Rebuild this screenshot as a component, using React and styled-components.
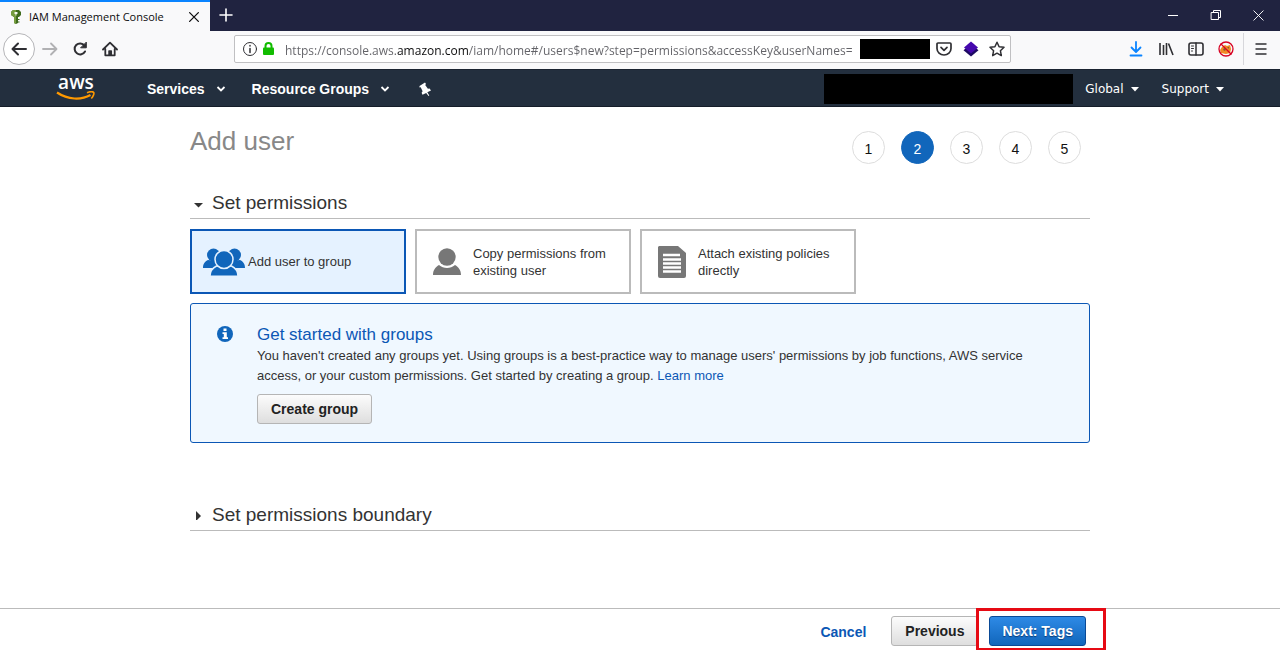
import React from "react";
import styled, { createGlobalStyle } from "styled-components";

const GlobalStyle = createGlobalStyle`
  * {
    box-sizing: border-box;
  }
  body {
    margin: 0;
    background: #fff;
    color: #333;
    font-family: "Liberation Sans", Arial, sans-serif;
    font-size: 14px;
  }
  button {
    font: inherit;
    color: inherit;
    padding: 0;
    border: 0;
    background: none;
    cursor: pointer;
  }
  a {
    color: #0b57b5;
    text-decoration: none;
  }
  svg {
    display: block;
    flex: none;
  }
`;

const Page = styled.div`
  display: flex;
  flex-direction: column;
  min-height: 100vh;
`;

/* Browser window */

const TitleBar = styled.div`
  display: flex;
  height: 31px;
  background: #202340;
  color: #fff;
`;

const Tab = styled.div`
  display: flex;
  align-items: center;
  width: 210px;
  padding: 0 8px 0 10px;
  border-top: 2px solid #0a84ff;
  background: #f9f9fa;
  color: #0c0c0d;
`;

const TabTitle = styled.span`
  flex: 1;
  margin-left: 7px;
  font: 11px "Open Sans", sans-serif;
  white-space: nowrap;
`;

const IconButton = styled.button`
  display: flex;
  align-items: center;
  justify-content: center;
  flex: none;
  width: ${props => props.$width || 30}px;
  height: ${props => props.$height || 30}px;
`;

const WindowControls = styled.div`
  display: flex;
  margin-left: auto;
`;

const ToolBar = styled.div`
  display: flex;
  align-items: center;
  height: 38px;
  padding: 0 4px 2px 3px;
  background: #f9f9fa;
  color: #2f2f33;
`;

const BackButton = styled(IconButton)`
  border: 1px solid #b5b5b8;
  border-radius: 50%;
  background: #fff;
`;

const AddressBar = styled.div`
  display: flex;
  align-items: center;
  flex: 1;
  height: 28px;
  margin: 0 110px 0 109px;
  padding: 0 0 0 7px;
  border: 1px solid #c0c0c2;
  border-radius: 2px;
  background: #fff;
`;

/* the registered domain is darker than the rest of the address */
const AddressInput = styled.input`
  flex: 1;
  min-width: 0;
  margin-left: 11px;
  padding: 2px 0 0;
  border: 0;
  outline: 0;
  font: 12px "Open Sans", sans-serif;
  color: transparent;
  background: linear-gradient(
    90deg,
    #626267 112px,
    #0c0c0d 112px,
    #0c0c0d 184px,
    #626267 184px
  );
  background-clip: text;
`;

const Redacted = styled.span`
  flex: none;
  width: ${props => props.$width}px;
  height: ${props => props.$height}px;
  background: #000;
`;

const ToolDivider = styled.span`
  width: 1px;
  height: 32px;
  margin: 0 2px;
  background: #d7d7db;
`;

/* Console navigation */

const NavBar = styled.nav`
  display: flex;
  align-items: center;
  height: 38px;
  padding: 2px 56px 0 56px;
  border-top: 1px solid #1a2330;
  border-bottom: 1px solid #151d29;
  background: #232f3e;
  color: #fff;
`;

const Logo = styled.a`
  display: flex;
  flex-direction: column;
  align-items: center;
  width: 40px;
  margin-right: 51px;
  padding-bottom: 4px;
  color: #fff;
  font: 600 19px/17px "Open Sans", sans-serif;
`;

const NavButton = styled.button`
  display: flex;
  align-items: center;
  gap: 11px;
  margin-right: 26px;
  font-weight: bold;
  white-space: nowrap;
`;

const NavRight = styled.div`
  display: flex;
  align-items: center;
  gap: 12px;
  margin-left: auto;
`;

const SmallNavButton = styled.button`
  display: flex;
  align-items: center;
  gap: 7px;
  margin-right: 11px;
  font: 12px "DejaVu Sans", sans-serif;

  &:last-child {
    margin-right: 0;
  }
`;

/* Wizard */

const Main = styled.main`
  flex: 1;
  width: 100%;
  max-width: 900px;
  margin: 0 auto;
  padding-top: 18px;
`;

const Heading = styled.div`
  display: flex;
  align-items: flex-end;
  justify-content: space-between;
  padding-right: 9px;
`;

const Title = styled.h1`
  margin: 0;
  color: #888;
  font-size: 26px;
  font-weight: normal;
  line-height: 32px;
  padding-bottom: 7px;
`;

const Steps = styled.ol`
  display: flex;
  gap: 16px;
  margin: 0;
  padding: 0;
  list-style: none;
`;

const Step = styled.li`
  display: flex;
  align-items: center;
  justify-content: center;
  width: 33px;
  height: 33px;
  padding-top: 2px;
  border: 1px solid ${props => (props.$active ? "#1166bb" : "#ddd")};
  border-radius: 50%;
  background: ${props => (props.$active ? "#1166bb" : "#fff")};
  color: ${props => (props.$active ? "#fff" : "#111")};
`;

const SectionTitle = styled.h2`
  margin: ${props => props.$top}px 0 10px;
  border-bottom: 1px solid #bbb;
  font-size: 19px;
  font-weight: normal;

  button {
    display: flex;
    align-items: center;
    gap: 8px;
    padding: 0 0 3px 4px;
    line-height: 24px;
  }
`;

const Options = styled.div`
  display: flex;
  gap: 9px;
`;

const Option = styled.button`
  display: flex;
  align-items: center;
  flex: 0 1 216px;
  height: 65px;
  padding: 0 12px 0 ${props => (props.$selected ? 11 : 15)}px;
  gap: ${props => (props.$selected ? 3 : 11)}px;
  border: 2px solid ${props => (props.$selected ? "#0b57b5" : "#bbb")};
  background: ${props => (props.$selected ? "#e5f2ff" : "#fff")};
  font-size: 13px;
  line-height: 17px;
  text-align: left;
`;

const InfoPanel = styled.section`
  display: flex;
  gap: 24px;
  margin-top: 9px;
  padding: 20px 40px 18px 26px;
  border: 1px solid #0b57b5;
  border-radius: 3px;
  background: #f0f8ff;

  > svg {
    margin-top: 2px;
  }
  h3 {
    margin: 0;
    color: #0b57b5;
    font-size: 17px;
    font-weight: normal;
    line-height: 22px;
  }
  p {
    margin: 0 0 8px;
    font-size: 13px;
    line-height: 20px;
  }
`;

const Button = styled.button`
  height: 30px;
  padding: 0 ${props => (props.$primary ? 12 : 13)}px;
  border: 1px solid ${props => (props.$primary ? "#0a4a96" : "#b5b5b5")};
  border-radius: 3px;
  background: ${props =>
    props.$primary
      ? "linear-gradient(#2e8ae6, #1166bb)"
      : "linear-gradient(#fcfcfc, #dedede)"};
  color: ${props => (props.$primary ? "#fff" : "#222")};
  text-shadow: ${props => (props.$primary ? "0 1px 1px #0a3a77" : "none")};
  font-weight: bold;
  white-space: nowrap;
`;

const Footer = styled.footer`
  height: 42px;
  border-top: 1px solid #bbb;
`;

const FooterActions = styled.div`
  display: flex;
  justify-content: flex-end;
  align-items: flex-start;
  max-width: 932px;
  margin: -1px auto 0;

  > a {
    margin: 16px 25px 0 0;
    font-weight: bold;
  }
  > ${Button} {
    margin-top: 8px;
  }
`;

const Marked = styled.div`
  margin-left: -2px;
  padding: 5px 17px 2px 10px;
  border: 3px solid #e60a14;
  background: #fff;
`;

const Icon = ({ size = 16, box = 16, children, ...rest }) => (
  <svg
    width={size}
    height={size}
    viewBox={`0 0 ${box} ${box}`}
    fill="none"
    stroke="currentColor"
    strokeWidth="2"
    strokeLinecap="round"
    strokeLinejoin="round"
    aria-hidden="true"
    {...rest}
  >
    {children}
  </svg>
);

const KeyIcon = () => (
  <svg width="12" height="16" viewBox="0 0 12 16" aria-hidden="true">
    <path d="M3 1h6l2 2v3L9 8H8v6l-2 1-2-1V8L1 6V3z" fill="#3f6b1d" />
    <path d="M3 1h3v14l-2-1V8L1 6V3z" fill="#759c3e" />
    <path d="M4.500 3h3v2h-1v1.500h-1V5h-1z" fill="#f4f8ee" />
    <path d="M8 10h1.500v1H8zM8 12.500h1.500v1H8z" fill="#3f6b1d" />
  </svg>
);

const CrossIcon = ({ size, width }) => (
  <Icon size={size} strokeWidth={width}>
    <path d="M3 3l10 10M13 3L3 13" />
  </Icon>
);

const CaretIcon = ({ right }) => (
  <svg width="10" height="10" viewBox="0 0 10 10" fill="#333" aria-hidden="true">
    <path d={right ? "M2 1l5 5-5 5z" : "M0 5h9L4.500 9.500z"} />
  </svg>
);

const ChevronIcon = () => (
  <svg width="10" height="8" viewBox="0 0 10 8" fill="none" aria-hidden="true">
    <path d="M1.500 2L5 5.500 8.500 2" stroke="#fff" strokeWidth="1.800" />
  </svg>
);

const TriangleIcon = () => (
  <svg width="8" height="5" viewBox="0 0 8 5" aria-hidden="true">
    <path d="M0 0h8L4 4.500z" fill="#fff" />
  </svg>
);

const UserIcon = () => (
  <svg width="30" height="28" viewBox="0 0 30 28" fill="#777" aria-hidden="true">
    <circle cx="15" cy="9" r="8.700" />
    <path d="M1 27c0-5 2.500-8 6-10 4.500 4 11.500 4 16 0 3.500 2 6 5 6 10z" />
  </svg>
);

const GroupIcon = () => (
  <svg width="42" height="28" viewBox="0 0 42 28" fill="#1166bb" aria-hidden="true">
    <circle cx="10.500" cy="7" r="6.500" />
    <circle cx="31.500" cy="7" r="6.500" />
    <path d="M0 20c0-4.500 2-6.500 5-8l9.500 1v7zM42 20c0-4.500-2-6.500-5-8l-9.500 1v7z" />
    <path
      d="M7 28.300c0-5 2.500-8.300 6.500-10.300h15c4 2 6.500 5.300 6.500 10.300z"
      stroke="#e5f2ff"
      strokeWidth="1.500"
    />
    <circle cx="21" cy="11.500" r="9" stroke="#e5f2ff" strokeWidth="1.500" />
  </svg>
);

const PolicyIcon = () => (
  <svg width="30" height="32" viewBox="0 0 30 32" aria-hidden="true">
    <path d="M2 0h19l8 7v23q0 2-2 2H3q-2 0-2-2V1z" fill="#777" />
    <path
      d="M6 9h17M6 13.500h18M6 17.500h18M6 21.500h18M6 25.500h18"
      stroke="#fff"
      strokeWidth="2.400"
    />
  </svg>
);

const InfoIcon = () => (
  <svg width="16" height="16" viewBox="0 0 16 16" aria-hidden="true">
    <circle cx="8" cy="8" r="8" fill="#1166bb" />
    <path d="M6.500 2.500h3v2.600h-3zM5.500 6.200h4.300v5h1.200V13H5.500v-1.800h1.300V8H5.500z" fill="#fff" />
  </svg>
);

const steps = [1, 2, 3, 4, 5];

const App = () => (
  <Page>
    <GlobalStyle />
    <TitleBar>
      <Tab>
        <KeyIcon />
        <TabTitle>IAM Management Console</TabTitle>
        <IconButton $width={16} aria-label="Close tab">
          <CrossIcon size={14} width="1.500" />
        </IconButton>
      </Tab>
      <IconButton $width={32} aria-label="New tab">
        <Icon strokeWidth="1.600">
          <path d="M8 2v12M2 8h12" />
        </Icon>
      </IconButton>
      <WindowControls>
        <IconButton $width={43} aria-label="Minimize">
          <Icon strokeWidth="1" strokeLinecap="butt">
            <path d="M3 8.500h10" />
          </Icon>
        </IconButton>
        <IconButton $width={43} aria-label="Restore">
          <Icon strokeWidth="1" strokeLinejoin="miter">
            <path d="M3.500 5.500h7v7h-7zM5.500 5.500v-2h7v7h-2" />
          </Icon>
        </IconButton>
        <IconButton $width={43} aria-label="Close window">
          <CrossIcon size={15} width="1" />
        </IconButton>
      </WindowControls>
    </TitleBar>

    <ToolBar>
      <BackButton $width={32} $height={32} aria-label="Back">
        <Icon>
          <path d="M15 8H2M7 2.500L1.500 8 7 13.500" />
        </Icon>
      </BackButton>
      <IconButton aria-label="Forward">
        <Icon stroke="#b1b1b3" strokeWidth="1.800">
          <path d="M1 8h13M9 2.500L14.500 8 9 13.500" />
        </Icon>
      </IconButton>
      <IconButton aria-label="Reload">
        <Icon>
          <path d="M13 10.500A5.500 5.500 0 1 1 12.500 4.500" />
          <path d="M14.300 1.500v5.300H9z" fill="currentColor" strokeWidth="1" />
        </Icon>
      </IconButton>
      <IconButton aria-label="Home">
        <Icon strokeWidth="1.800">
          <path d="M1 8.500L8 1.700l7 6.800M3.300 8v6.300h9.400V8" />
          <path d="M7 14v-4h2.300v4z" strokeWidth="1.500" fill="currentColor" />
        </Icon>
      </IconButton>

      <AddressBar>
        <Icon strokeWidth="1">
          <circle cx="8" cy="8" r="6.500" />
          <path d="M8 7.500v4M8 4.500v.4" strokeWidth="1.500" />
        </Icon>
        <Icon stroke="none">
          <path
            d="M7.500 7V5a3 3 0 0 1 6 0v2"
            stroke="#12bc00"
            strokeLinecap="butt"
          />
          <path d="M6 6.500h9q1 0 1 1V13q0 1-1 1H6q-1 0-1-1V7.500q0-1 1-1z" fill="#12bc00" />
        </Icon>
        <AddressInput
          aria-label="Address"
          spellCheck="false"
          defaultValue="https://console.aws.amazon.com/iam/home#/users$new?step=permissions&accessKey&userNames="
        />
        <Redacted $width={70} $height={20} />
        <IconButton $width={28} $height={26} aria-label="Save to Pocket">
          <Icon strokeWidth="1.700">
            <path d="M2 2h12q1 0 1 1v4.500a7 6.500 0 0 1-14 0V3q0-1 1-1z" />
            <path d="M5 6.300l3 3 3-3" />
          </Icon>
        </IconButton>
        <IconButton $width={26} $height={26} aria-label="Extension">
          <Icon stroke="none">
            <path d="M8 3l7.500 6.300L8 15.500.5 9.300z" fill="#1d0a63" />
            <path d="M8 .5L15 6.500l-7 6-7-6z" fill="#4508ad" />
          </Icon>
        </IconButton>
        <IconButton $width={26} $height={26} aria-label="Bookmark this page">
          <Icon strokeWidth="1.500">
            <path d="M8 1.200l2.100 4.500 4.900.6-3.600 3.400.9 4.900L8 12.200l-4.300 2.400.9-4.900L1 6.300l4.900-.6z" />
          </Icon>
        </IconButton>
      </AddressBar>

      <IconButton aria-label="Downloads">
        <Icon stroke="#0a84ff" strokeWidth="1.800">
          <path d="M8 1v9M3.500 6.500L8 11l4.500-4.500M2.500 14.500h11" />
        </Icon>
      </IconButton>
      <IconButton aria-label="Library">
        <Icon strokeWidth="1.600" strokeLinecap="butt">
          <path d="M2 2v12M5.500 4v10M8.500 2v12M10.500 2.500L15 14" />
        </Icon>
      </IconButton>
      <IconButton aria-label="Sidebars">
        <Icon strokeWidth="1.600">
          <rect x="1" y="2" width="14" height="12" rx="2" />
          <path d="M8 2v12" strokeWidth="1.500" />
          <path d="M3.500 5h2M3.500 7.500h2M3.500 10h1" strokeWidth="1" />
        </Icon>
      </IconButton>
      <IconButton aria-label="Cookie manager">
        <Icon strokeWidth="1.300" stroke="#d70022">
          <path d="M4 6l3-2 2 1 3-1 1 4-1 4-4 1-5-1-1-3z" fill="#f08a24" stroke="none" />
          <path d="M5 8l2-1 1 2-2 1zM9 6h2v2z" fill="#8b5a2b" stroke="none" />
          <circle cx="8" cy="8" r="7" />
          <path d="M3 3l10 10" />
        </Icon>
      </IconButton>
      <ToolDivider />
      <IconButton aria-label="Menu">
        <Icon strokeWidth="1.600" strokeLinecap="butt">
          <path d="M2.500 3h11M2.500 8h11M2.500 13h11" />
        </Icon>
      </IconButton>
    </ToolBar>

    <NavBar>
      <Logo href="#home">
        aws
        <svg width="40" height="10" viewBox="0 0 40 10" fill="none" aria-hidden="true">
          <path d="M1 1.500C12 8.800 25 9.300 34.500 4" stroke="#ff9900" strokeWidth="2.200" />
          <path d="M31 1.700c3-1.300 6-1.200 6.700-.3.700 1-.5 4.200-2.400 6.100" stroke="#ff9900" strokeWidth="1.600" />
        </svg>
      </Logo>
      <NavButton>
        Services
        <ChevronIcon />
      </NavButton>
      <NavButton>
        Resource Groups
        <ChevronIcon />
      </NavButton>
      <IconButton $width={18} aria-label="Pin shortcuts">
        <svg width="14" height="14" viewBox="0 0 14 14" fill="#fff" aria-hidden="true">
          <path d="M1.500 4L7 .5l1 1.600-.8 1 2.700 3.600 1.700-.1 1.400 1.900-3.700 1.800 2 3.200-.8.500-2.300-3-3.700 1.800-.9-2 1-1.600-1.900-3.900-1.200.1z" />
        </svg>
      </IconButton>
      <NavRight>
        <Redacted $width={249} $height={30} />
        <SmallNavButton>
          Global
          <TriangleIcon />
        </SmallNavButton>
        <SmallNavButton>
          Support
          <TriangleIcon />
        </SmallNavButton>
      </NavRight>
    </NavBar>

    <Main>
      <Heading>
        <Title>Add user</Title>
        <Steps>
          {steps.map(step => (
            <Step key={step} $active={step === 2}>
              {step}
            </Step>
          ))}
        </Steps>
      </Heading>

      <SectionTitle $top={27}>
        <button aria-expanded="true">
          <CaretIcon />
          Set permissions
        </button>
      </SectionTitle>
      <Options>
        <Option $selected aria-pressed="true">
          <GroupIcon />
          Add user to group
        </Option>
        <Option>
          <UserIcon />
          Copy permissions from existing user
        </Option>
        <Option>
          <PolicyIcon />
          Attach existing policies directly
        </Option>
      </Options>
      <InfoPanel>
        <InfoIcon />
        <div>
          <h3>Get started with groups</h3>
          <p>
            You haven't created any groups yet. Using groups is a best-practice
            way to manage users' permissions by job functions, AWS service
            access, or your custom permissions. Get started by creating a group.{" "}
            <a href="#learn-more">Learn more</a>
          </p>
          <Button>Create group</Button>
        </div>
      </InfoPanel>

      <SectionTitle $top={60}>
        <button aria-expanded="false">
          <CaretIcon right />
          Set permissions boundary
        </button>
      </SectionTitle>
    </Main>

    <Footer>
      <FooterActions>
        <a href="#cancel">Cancel</a>
        <Button>Previous</Button>
        <Marked>
          <Button $primary>Next: Tags</Button>
        </Marked>
      </FooterActions>
    </Footer>
  </Page>
);

export default App;
